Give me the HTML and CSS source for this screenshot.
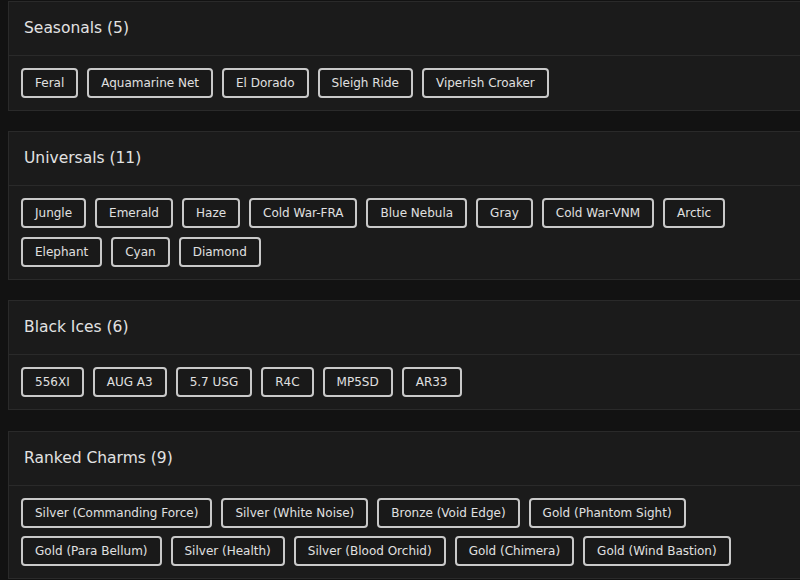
FILE: index.html
```html
<!DOCTYPE html>
<html lang="en">

<head>
    <meta charset="UTF-8">
    <meta name="viewport" content="width=device-width, initial-scale=1.0">
    <title>Collection</title>
    <link rel="stylesheet" href="styles.css">
</head>

<body>
    <div class="wrap">
        <!-- Seasonals -->
        <div class="card">
            <div class="card-head">Seasonals (5)</div>
            <div class="card-body">
                <span class="tag">Feral</span>
                <span class="tag">Aquamarine Net</span>
                <span class="tag">El Dorado</span>
                <span class="tag">Sleigh Ride</span>
                <span class="tag">Viperish Croaker</span>
            </div>
        </div>

        <!-- Universals -->
        <div class="card">
            <div class="card-head">Universals (11)</div>
            <div class="card-body">
                <span class="tag">Jungle</span>
                <span class="tag">Emerald</span>
                <span class="tag">Haze</span>
                <span class="tag">Cold War-FRA</span>
                <span class="tag">Blue Nebula</span>
                <span class="tag">Gray</span>
                <span class="tag">Cold War-VNM</span>
                <span class="tag">Arctic</span>
                <span class="tag">Elephant</span>
                <span class="tag">Cyan</span>
                <span class="tag">Diamond</span>
            </div>
        </div>

        <!-- Black Ices -->
        <div class="card">
            <div class="card-head">Black Ices (6)</div>
            <div class="card-body">
                <span class="tag">556XI</span>
                <span class="tag">AUG A3</span>
                <span class="tag">5.7 USG</span>
                <span class="tag">R4C</span>
                <span class="tag">MP5SD</span>
                <span class="tag">AR33</span>
            </div>
        </div>

        <!-- Ranked Charms -->
        <div class="card">
            <div class="card-head">Ranked Charms (9)</div>
            <div class="card-body">
                <span class="tag">Silver (Commanding Force)</span>
                <span class="tag">Silver (White Noise)</span>
                <span class="tag">Bronze (Void Edge)</span>
                <span class="tag">Gold (Phantom Sight)</span>
                <span class="tag">Gold (Para Bellum)</span>
                <span class="tag">Silver (Health)</span>
                <span class="tag">Silver (Blood Orchid)</span>
                <span class="tag">Gold (Chimera)</span>
                <span class="tag">Gold (Wind Bastion)</span>
            </div>
        </div>
    </div>
</body>

</html>
```

FILE: styles.css
```css
* {
    margin: 0;
    padding: 0;
    box-sizing: border-box;
}

html,
body {
    background-color: #121212;
    overflow: hidden;
}

body {
    font-family: "DejaVu Sans", "Noto Sans", sans-serif;
    color: #e2e2e2;
}

.wrap {
    width: 812px;
    margin-left: 8px;
    padding-top: 1px;
    display: flex;
    flex-direction: column;
    gap: 20.4px;
}

.card {
    background-color: #1b1b1b;
    border: 1px solid #2a2a2a;
}

.card-head {
    height: 54px;
    padding: 0 15px 1px;
    display: flex;
    align-items: center;
    font-size: 15.5px;
    font-weight: 500;
    border-bottom: 1px solid #2a2a2a;
}

.card-body {
    padding: 12px;
    display: flex;
    flex-wrap: wrap;
    gap: 8.6px 9px;
    width: 780px;
}

.tag {
    height: 30px;
    padding: 0 12px;
    display: flex;
    align-items: center;
    border: 2px solid #c9c9c9;
    border-radius: 4px;
    font-size: 12px;
    color: #e0e0e0;
    background-color: #191919;
}
```
